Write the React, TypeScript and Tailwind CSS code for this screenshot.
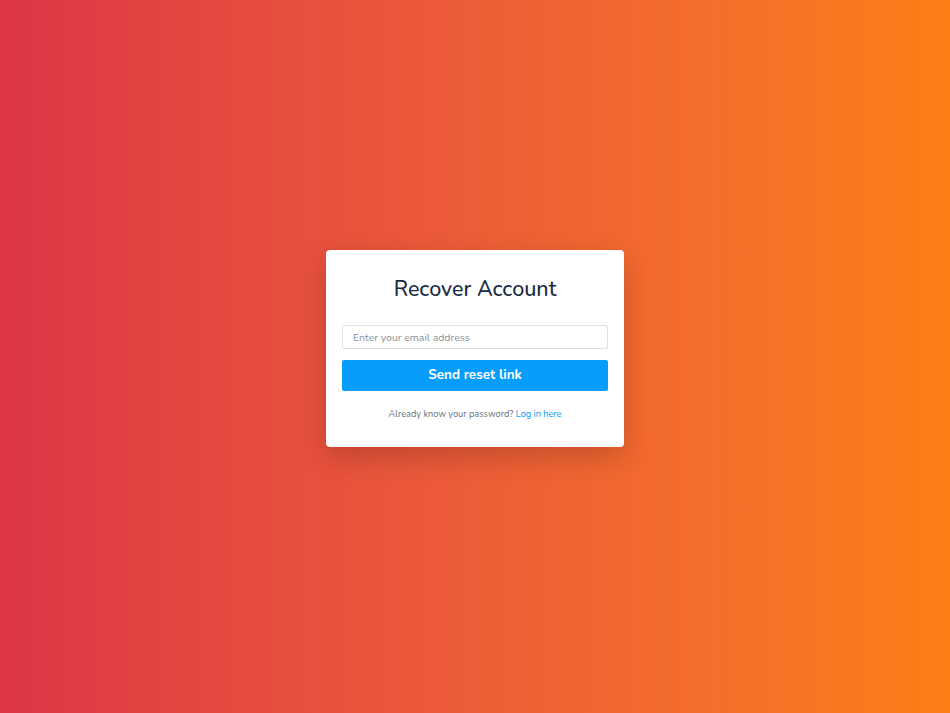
import React from "react";

export default function App() {
  return (
    <div
      className="flex h-[713px] w-full items-center justify-center bg-gradient-to-r from-[#dc3545] to-[#fd7e14] pb-4"
      style={{ fontFamily: "Nunito, Lato, 'Noto Sans', sans-serif" }}
    >
      <div className="w-[298px] rounded-[4px] bg-white px-4 pb-[27px] pt-[25px] shadow-[0_10px_28px_rgba(0,0,0,0.18)]">
        <h1 className="text-center text-[21.5px] leading-[28px] font-medium text-[#1b2a44]">Recover Account</h1>
        <input
          type="email"
          placeholder="Enter your email address"
          className="mt-[22px] block h-[24px] w-full rounded-[2px] border border-[#dde1e6] px-[10px] text-[10.5px] text-gray-700 outline-none placeholder:text-[#8a929c]"
        />
        <button className="mt-[11px] block h-[31px] w-full rounded-[2px] bg-[#079dfc] text-[13.5px] font-bold text-white">
          Send reset link
        </button>
        <p className="mt-[17px] text-center text-[9.2px] leading-[12px] text-[#6b7280]">
          Already know your password? <a className="text-[#0a9cf8]">Log in here</a>
        </p>
      </div>
    </div>
  );
}
